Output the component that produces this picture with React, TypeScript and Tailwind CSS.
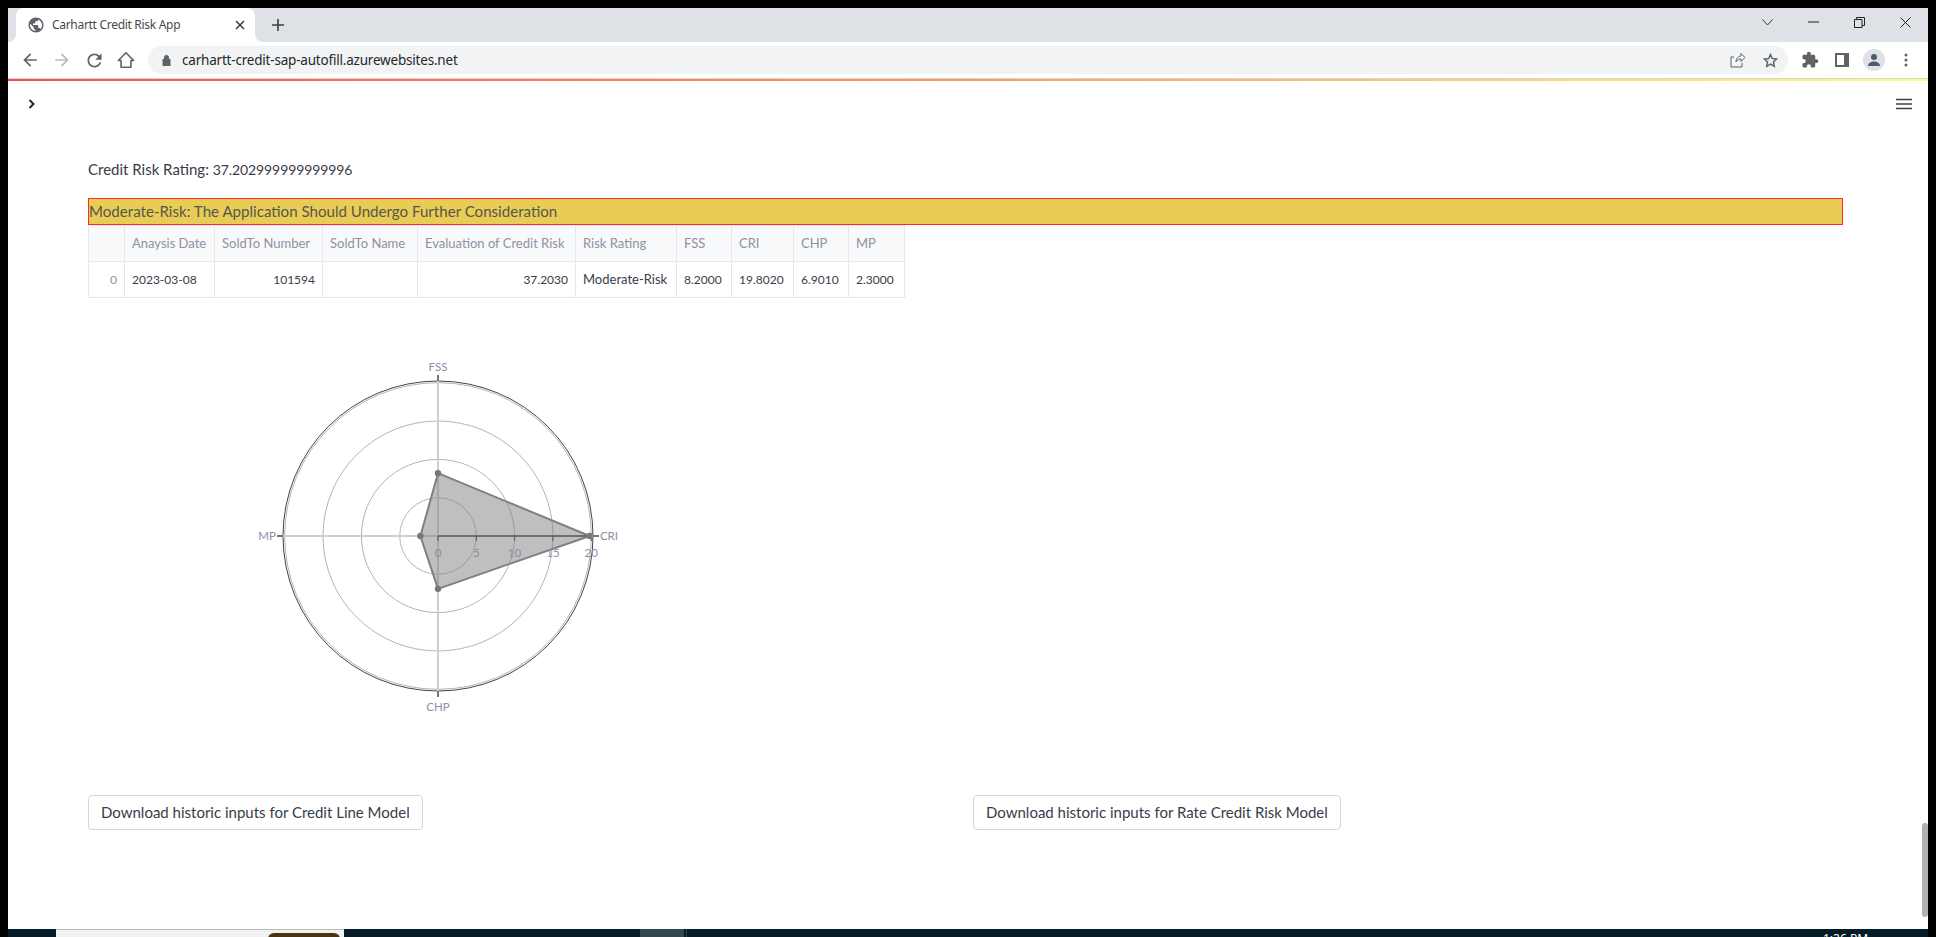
import React from "react";

const FONT = { fontFamily: '"Lato", "Noto Sans", sans-serif' };
const UI = { fontFamily: '"Noto Sans", sans-serif' };

function Globe() {
  return (
    <svg width="18" height="18" viewBox="0 0 24 24" className="shrink-0">
      <path fill="#5f6368" d="M12 2C6.480 2 2 6.480 2 12s4.480 10 10 10 10-4.480 10-10S17.520 2 12 2zm-1 17.930c-3.950-.49-7-3.850-7-7.930 0-.62.08-1.210.21-1.790L9 15v1c0 1.100.9 2 2 2v1.930zm6.900-2.540c-.26-.81-1-1.390-1.900-1.390h-1v-3c0-.55-.45-1-1-1H8v-2h2c.55 0 1-.45 1-1V7h2c1.100 0 2-.9 2-2v-.41c2.930 1.190 5 4.060 5 7.410 0 2.080-.8 3.970-2.100 5.390z" />
    </svg>
  );
}

function Chart() {
  const cx = 188;
  const cy = 185;
  const unit = 38.3 / 5;
  const pts = [
    [cx, cy - 8.2 * unit],
    [cx + 19.8 * unit, cy],
    [cx, cy + 6.9 * unit],
    [cx - 2.3 * unit, cy],
  ];
  const poly = pts.map((p) => p.join(",")).join(" ");
  const label = "#8b8fa8";
  return (
    <svg width="376" height="370" viewBox="0 0 376 370" className="block">
      {[38.3, 76.6, 115, 153.3].map((r) => (
        <circle key={r} cx={cx} cy={cy} r={r} fill="none" stroke="#b5b5b5" strokeWidth="1" />
      ))}
      <circle cx={cx} cy={cy} r={155} fill="none" stroke="#444" strokeWidth="1" />
      <line x1={cx} y1={cy - 161} x2={cx} y2={cy + 161} stroke="#cfcfcf" strokeWidth="2" />
      <line x1={cx - 161} y1={cy} x2={cx + 161} y2={cy} stroke="#cfcfcf" strokeWidth="2" />
      <line x1={cx} y1={cy - 161} x2={cx} y2={cy - 155} stroke="#777" strokeWidth="2" />
      <line x1={cx} y1={cy + 155} x2={cx} y2={cy + 161} stroke="#777" strokeWidth="2" />
      <line x1={cx - 161} y1={cy} x2={cx - 155} y2={cy} stroke="#777" strokeWidth="2" />
      <line x1={cx + 155} y1={cy} x2={cx + 161} y2={cy} stroke="#777" strokeWidth="2" />
      <polygon points={poly} fill="#808080" fillOpacity="0.5" stroke="#808080" strokeWidth="2" strokeLinejoin="round" />
      <line x1={cx} y1={cy} x2={cx + 153.3} y2={cy} stroke="#6f6f6f" strokeWidth="2" />
      {[0, 1, 2, 3, 4].map((i) => (
        <line key={i} x1={cx + i * 38.3} y1={cy} x2={cx + i * 38.3} y2={cy + 5} stroke="#555" strokeWidth="1" />
      ))}
      {pts.map((p, i) => (
        <circle key={i} cx={p[0]} cy={p[1]} r="3.2" fill="#777" />
      ))}
      <g fontSize="11.5" fill={label} style={FONT} textAnchor="middle">
        {[0, 5, 10, 15, 20].map((v, i) => (
          <text key={v} x={cx + i * 38.3} y={cy + 20.5}>{v}</text>
        ))}
        <text x={cx} y={cy - 165}>FSS</text>
        <text x={cx} y={cy + 175}>CHP</text>
        <text x={cx - 171} y={cy + 4}>MP</text>
        <text x={cx + 171} y={cy + 4}>CRI</text>
      </g>
    </svg>
  );
}

const COLS = [36, 90, 108, 95, 158, 101, 55, 62, 55, 56];
const HEADS = ["", "Anaysis Date", "SoldTo Number", "SoldTo Name", "Evaluation of Credit Risk", "Risk Rating", "FSS", "CRI", "CHP", "MP"];
const ROW: [string, string][] = [
  ["0", "text-right text-[#8e91a0] text-[12px]"],
  ["2023-03-08", "text-left text-[12px]"],
  ["101594", "text-right text-[12px]"],
  ["", "text-left"],
  ["37.2030", "text-right text-[12px]"],
  ["Moderate-Risk", "text-left"],
  ["8.2000", "text-left text-[12px]"],
  ["19.8020", "text-left text-[12px]"],
  ["6.9010", "text-left text-[12px]"],
  ["2.3000", "text-left text-[12px]"],
];

function DataTable() {
  return (
    <table className="table-fixed border-collapse text-[13px] w-[816px]">
      <colgroup>
        {COLS.map((w, i) => (
          <col key={i} style={{ width: w }} />
        ))}
      </colgroup>
      <tbody>
        <tr className="h-[36px] bg-[#f8f9fb]">
          {HEADS.map((h, i) => (
            <td key={i} className="border border-[#e6e7eb] px-[7px] text-[#8e91a0] whitespace-nowrap overflow-hidden">{h}</td>
          ))}
        </tr>
        <tr className="h-[36px] text-[#3a3c48]">
          {ROW.map(([v, c], i) => (
            <td key={i} className={`border border-[#e6e7eb] px-[7px] whitespace-nowrap ${c}`}>{v}</td>
          ))}
        </tr>
      </tbody>
    </table>
  );
}

function ToolSlot({ children }: { children: React.ReactNode }) {
  return <div className="w-[32px] h-[28px] flex items-center justify-center shrink-0">{children}</div>;
}

function WinSlot({ children }: { children: React.ReactNode }) {
  return <div className="w-[46px] flex justify-center">{children}</div>;
}

export default function App() {
  return (
    <div className="h-[937px] w-[1936px] bg-black flex flex-col overflow-hidden pt-[8px]" style={FONT}>
      <div className="flex-1 min-h-0 mx-2 flex flex-col bg-white relative overflow-hidden">
        {/* tab strip */}
        <div className="h-[34px] bg-[#dee1e6] flex items-stretch shrink-0">
          <div className="relative ml-[8px] w-[239px] bg-white rounded-t-[8px] flex items-center pl-[11px] pr-[10px]">
            <div className="absolute -left-[8px] bottom-0 w-[8px] h-[8px] bg-white">
              <div className="w-full h-full bg-[#dee1e6] rounded-br-[8px]" />
            </div>
            <div className="absolute -right-[8px] bottom-0 w-[8px] h-[8px] bg-white">
              <div className="w-full h-full bg-[#dee1e6] rounded-bl-[8px]" />
            </div>
            <Globe />
            <span className="ml-[7px] text-[12px] text-[#45494f] flex-1 whitespace-nowrap" style={{ ...UI, letterSpacing: "-0.3px" }}>Carhartt Credit Risk App</span>
            <svg width="10" height="10" viewBox="0 0 10 10"><path d="M1 1l8 8M9 1l-8 8" stroke="#3c4043" strokeWidth="1.6" /></svg>
          </div>
          <div className="ml-[16px] flex items-center">
            <svg width="14" height="14" viewBox="0 0 14 14"><path d="M7 1v12M1 7h12" stroke="#3c4043" strokeWidth="1.6" /></svg>
          </div>
          <div className="ml-auto flex items-center pb-[6px]">
            <WinSlot>
              <svg width="11" height="7" viewBox="0 0 11 7"><path d="M.5.5l5 5.500 5-5.500" stroke="#333" fill="none" /></svg>
            </WinSlot>
            <WinSlot>
              <svg width="11" height="2" viewBox="0 0 11 2"><path d="M0 1h11" stroke="#222" /></svg>
            </WinSlot>
            <WinSlot>
              <svg width="11" height="11" viewBox="0 0 11 11"><path d="M.5 2.500h7.500v8H.5zM2.500 2.500V.5h8v8H8" stroke="#222" fill="none" /></svg>
            </WinSlot>
            <WinSlot>
              <svg width="11" height="11" viewBox="0 0 11 11"><path d="M.5.5l10 10M10.500.5l-10 10" stroke="#222" /></svg>
            </WinSlot>
          </div>
        </div>
        {/* toolbar */}
        <div className="h-[37px] bg-white flex items-center shrink-0 border-b border-[#d4d5d8] pl-[6px] pr-[6px]">
          <ToolSlot>
            <svg width="20" height="20" viewBox="0 0 24 24"><path fill="#5f6368" d="M20 11H7.830l5.590-5.590L12 4l-8 8 8 8 1.410-1.410L7.830 13H20v-2z" /></svg>
          </ToolSlot>
          <ToolSlot>
            <svg width="20" height="20" viewBox="0 0 24 24"><path fill="#b8babd" d="M4 11h12.170l-5.590-5.590L12 4l8 8-8 8-1.410-1.410L16.170 13H4v-2z" /></svg>
          </ToolSlot>
          <ToolSlot>
            <svg width="21" height="21" viewBox="0 0 24 24"><path fill="#5f6368" d="M17.650 6.350C16.200 4.900 14.210 4 12 4c-4.420 0-7.990 3.580-7.990 8s3.570 8 7.990 8c3.730 0 6.840-2.550 7.730-6h-2.080c-.82 2.330-3.040 4-5.650 4-3.310 0-6-2.690-6-6s2.690-6 6-6c1.660 0 3.140.69 4.220 1.780L13 11h7V4l-2.350 2.350z" /></svg>
          </ToolSlot>
          <ToolSlot>
            <svg width="18" height="18" viewBox="0 0 20 20"><path d="M1.500 10.500L10 2l8.500 8.500H15.500V18h-11v-7.500z" stroke="#5f6368" strokeWidth="1.800" fill="none" strokeLinejoin="round" /></svg>
          </ToolSlot>
          <div className="ml-[6px] flex-1 h-[28px] rounded-full bg-[#f1f3f4] flex items-center pl-[14px] pr-[2px]">
            <svg width="9" height="12" viewBox="0 0 9 12"><path d="M2 5V3.500a2.500 2.500 0 0 1 5 0V5h1.500v7H.5V5z" fill="#5f6368" /></svg>
            <span className="ml-[11px] text-[13.5px] text-[#25282c] whitespace-nowrap" style={{ ...UI, letterSpacing: "-0.2px" }}>carhartt-credit-sap-autofill.azurewebsites.net</span>
            <div className="ml-auto flex items-center">
              <ToolSlot>
                <svg width="16" height="16" viewBox="0 0 16 16"><path d="M4 5H1v10h11v-4M6 10c0-4 3-6 5-6V1.500l4 4-4 4V7c-2 0-4 1-5 3z" stroke="#5f6368" fill="none" /></svg>
              </ToolSlot>
              <ToolSlot>
                <svg width="15" height="15" viewBox="0 0 24 24"><path d="M12 2.500l2.900 6.400 6.900.8-5.100 4.700 1.400 6.900-6.100-3.500-6.100 3.500 1.400-6.900-5.100-4.700 6.900-.8z" stroke="#5f6368" strokeWidth="2.300" fill="none" /></svg>
              </ToolSlot>
            </div>
          </div>
          <div className="ml-[6px] flex items-center">
            <ToolSlot>
              <svg width="18" height="18" viewBox="0 0 24 24"><path fill="#5f6368" d="M20.500 11H19V7c0-1.100-.9-2-2-2h-4V3.500C13 2.120 11.880 1 10.500 1S8 2.120 8 3.500V5H4c-1.100 0-1.990.9-1.990 2v3.800H3.500c1.490 0 2.700 1.210 2.700 2.700s-1.210 2.700-2.700 2.700H2V20c0 1.100.9 2 2 2h3.800v-1.500c0-1.490 1.210-2.700 2.700-2.700 1.490 0 2.700 1.210 2.700 2.700V22H17c1.100 0 2-.9 2-2v-4h1.500c1.380 0 2.500-1.120 2.500-2.500S21.880 11 20.500 11z" /></svg>
            </ToolSlot>
            <ToolSlot>
              <svg width="14" height="14" viewBox="0 0 14 14"><path d="M0 0h14v14H0zM2 2v10h7V2z" fill="#5f6368" fillRule="evenodd" /></svg>
            </ToolSlot>
            <ToolSlot>
              <div className="w-[22px] h-[22px] rounded-full bg-[#dee1e6] flex items-center justify-center">
                <svg width="14" height="14" viewBox="0 0 14 14"><circle cx="7" cy="4" r="3" fill="#4f5b6b" /><path d="M1 13c0-3 3-4.500 6-4.500s6 1.500 6 4.500z" fill="#4f5b6b" /></svg>
              </div>
            </ToolSlot>
            <ToolSlot>
              <svg width="4" height="14" viewBox="0 0 4 14"><circle cx="2" cy="2" r="1.500" fill="#5f6368" /><circle cx="2" cy="7" r="1.500" fill="#5f6368" /><circle cx="2" cy="12" r="1.500" fill="#5f6368" /></svg>
            </ToolSlot>
          </div>
        </div>
        {/* decoration */}
        <div className="h-[2px] shrink-0 bg-gradient-to-r from-[#ff4b4b] via-[#ff9a5c] to-[#fffd80]" />
        {/* streamlit header */}
        <div className="h-[12px] mt-[17px] flex items-center justify-between pl-[19px] pr-[16px] shrink-0">
          <svg width="10" height="10" viewBox="0 0 10 10"><path d="M2.500 1l4 4-4 4" stroke="#262730" strokeWidth="2" fill="none" /></svg>
          <svg width="16" height="12" viewBox="0 0 16 12"><path d="M0 1.500h16M0 6h16M0 10.500h16" stroke="#3d3f4a" strokeWidth="1.600" /></svg>
        </div>
        {/* main */}
        <div className="pl-[80px] pr-[85px] pt-[47px] flex flex-col text-[#3a3c48]">
          <p className="h-[24px] text-[15px] leading-[24px]">Credit Risk Rating: <span className="text-[14px] tracking-[-0.1px]">37.202999999999996</span></p>
          <div className="mt-[17px] h-[27px] border border-[#ff2a2a] bg-[#e8cc55] text-[15.100px] leading-[24px] text-[#56574c]">Moderate-Risk: The Application Should Undergo Further Consideration</div>
          <div><DataTable /></div>
          <div className="mt-[53px] ml-[162px]"><Chart /></div>
          <div className="mt-[74px] flex">
            <div className="w-[885px]">
              <button className="h-[35px] px-[12px] rounded-[4px] border border-[#d6d6d9] bg-white text-[15px]">Download historic inputs for Credit Line Model</button>
            </div>
            <button className="h-[35px] px-[12px] rounded-[4px] border border-[#d6d6d9] bg-white text-[15px]">Download historic inputs for Rate Credit Risk Model</button>
          </div>
        </div>
        <div className="absolute right-0 top-[815px] w-[6px] h-[94px] rounded-full bg-[#b0b0b5]" />
      </div>
      {/* taskbar */}
      <div className="h-[8px] shrink-0 mx-2 bg-[#031c27] flex overflow-hidden relative">
        <div className="ml-[48px] w-[288px] bg-[#f1f1f1] border-t border-[#bbb] relative">
          <div className="absolute left-[212px] top-[3px] w-[72px] h-[8px] rounded-t-[6px] bg-[#4a3410]" />
        </div>
        <div className="ml-[296px] w-[44px] bg-[#33474f]" />
        <div className="ml-[2px] w-[1px] bg-[#33474f]" />
        <span className="absolute left-[1815px] top-[3px] text-[12px] leading-[14px] text-white whitespace-nowrap" style={UI}>1:26 PM</span>
      </div>
    </div>
  );
}
